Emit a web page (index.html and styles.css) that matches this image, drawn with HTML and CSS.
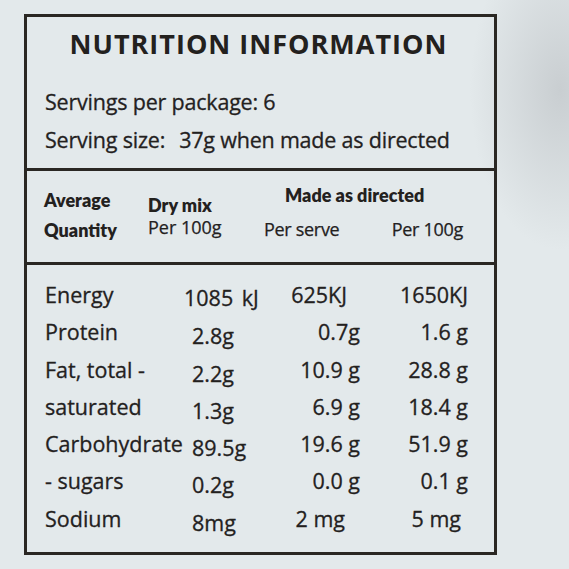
FILE: index.html
```html
<!DOCTYPE html>
<html lang="en">
<head>
    <meta charset="UTF-8">
    <meta name="viewport" content="width=device-width, initial-scale=1.0">
    <title>Nutrition Information</title>
    <link rel="stylesheet" href="styles.css">
</head>
<body>
    <div class="label">
        <!-- Titulo e porcoes -->
        <section class="top">
            <h1 class="title">NUTRITION INFORMATION</h1>
            <p class="serv">Servings per package: 6</p>
            <p class="serv">Serving size:<span class="gap">37g when made as directed</span></p>
        </section>

        <!-- Cabecalho das colunas -->
        <section class="head">
            <div class="h-qty">Average<br>Quantity</div>
            <div class="h-dry">
                <b>Dry mix</b>
                <span>Per 100g</span>
            </div>
            <div class="h-made">
                <b>Made as directed</b>
                <div class="h-sub">
                    <span>Per serve</span>
                    <span>Per 100g</span>
                </div>
            </div>
        </section>

        <!-- Valores -->
        <section class="data">
            <div class="row energy">
                <span class="name">Energy</span>
                <span class="dry">1085 kJ</span>
                <span class="val">625KJ</span>
                <span class="val">1650KJ</span>
            </div>
            <div class="row">
                <span class="name">Protein</span>
                <span class="dry">2.8g</span>
                <span class="val">0.7g</span>
                <span class="val">1.6 g</span>
            </div>
            <div class="row">
                <span class="name">Fat, total -</span>
                <span class="dry">2.2g</span>
                <span class="val">10.9 g</span>
                <span class="val">28.8 g</span>
            </div>
            <div class="row">
                <span class="name">saturated</span>
                <span class="dry">1.3g</span>
                <span class="val">6.9 g</span>
                <span class="val">18.4 g</span>
            </div>
            <div class="row">
                <span class="name">Carbohydrate</span>
                <span class="dry">89.5g</span>
                <span class="val">19.6 g</span>
                <span class="val">51.9 g</span>
            </div>
            <div class="row">
                <span class="name">- sugars</span>
                <span class="dry">0.2g</span>
                <span class="val">0.0 g</span>
                <span class="val">0.1 g</span>
            </div>
            <div class="row sodium">
                <span class="name">Sodium</span>
                <span class="dry">8mg</span>
                <span class="val">2 mg</span>
                <span class="val">5 mg</span>
            </div>
        </section>
    </div>
</body>
</html>
```

FILE: styles.css
```css
* {
    margin: 0;
    padding: 0;
    box-sizing: border-box;
}

body, html {
    height: 100%;
    overflow: hidden;
}

body {
    font-family: "Open Sans", "Noto Sans", sans-serif;
    color: #23211e;
    background: #e3e9eb;
    background-image: radial-gradient(ellipse 90px 160px at 560px 90px, #c9ced1, rgba(227, 233, 235, 0));
}

.label {
    width: 473px;
    height: 541px;
    margin: 14px 0 0 24px;
    border: 3px solid #2a2723;
    display: flex;
    flex-direction: column;
}

/* topo */
.top {
    height: 154px;
    border-bottom: 3px solid #2a2723;
    padding-top: 10px;
}

.title {
    font-size: 27px;
    line-height: 34px;
    font-weight: 700;
    letter-spacing: 1px;
    text-align: center;
    white-space: nowrap;
    margin-left: -4px;
}

.serv {
    font-size: 21.5px;
    line-height: 38px;
    padding-left: 18px;
    letter-spacing: -0.2px;
    -webkit-text-stroke: 0.3px currentColor;
}

.top .title + .serv {
    margin-top: 22px;
}

.gap {
    margin-left: 14px;
}

/* cabecalho */
.head {
    height: 94px;
    border-bottom: 3px solid #2a2723;
    padding-left: 17px;
    display: flex;
}

.head b {
    font-family: Lato, sans-serif;
    font-weight: 800;
    font-size: 18px;
}

.h-qty {
    width: 104px;
    padding-top: 14px;
    font-family: Lato, sans-serif;
    font-weight: 800;
    font-size: 18px;
    line-height: 30px;
}

.h-dry {
    width: 116px;
    padding-top: 23px;
    display: flex;
    flex-direction: column;
    font-size: 18px;
    line-height: 22px;
}

.h-made {
    width: 199px;
    padding-top: 13px;
    font-size: 18px;
    line-height: 22px;
}

.h-dry span,
.h-sub span {
    -webkit-text-stroke: 0.25px currentColor;
}

.h-made b {
    display: block;
    padding-left: 21px;
}

.h-sub {
    margin-top: 12px;
    display: flex;
    justify-content: space-between;
    letter-spacing: -0.3px;
}

/* valores */
.data {
    flex: 1;
    padding: 11px 0 0 18px;
}

.row {
    display: grid;
    grid-template-columns: 147px 83px 85px 108px;
    font-size: 21.5px;
    line-height: 37.3px;
    height: 37.3px;
    -webkit-text-stroke: 0.3px currentColor;
}

.row .dry {
    padding-top: 4px;
}

.row .val {
    text-align: right;
}

.energy .dry {
    margin-left: -8px;
    padding-top: 3px;
    white-space: nowrap;
    word-spacing: 3px;
}

.energy .val:nth-child(3) {
    padding-right: 13px;
}

.sodium .val:nth-child(3) {
    padding-right: 15px;
}

.sodium .val:nth-child(4) {
    padding-right: 7px;
}
```
